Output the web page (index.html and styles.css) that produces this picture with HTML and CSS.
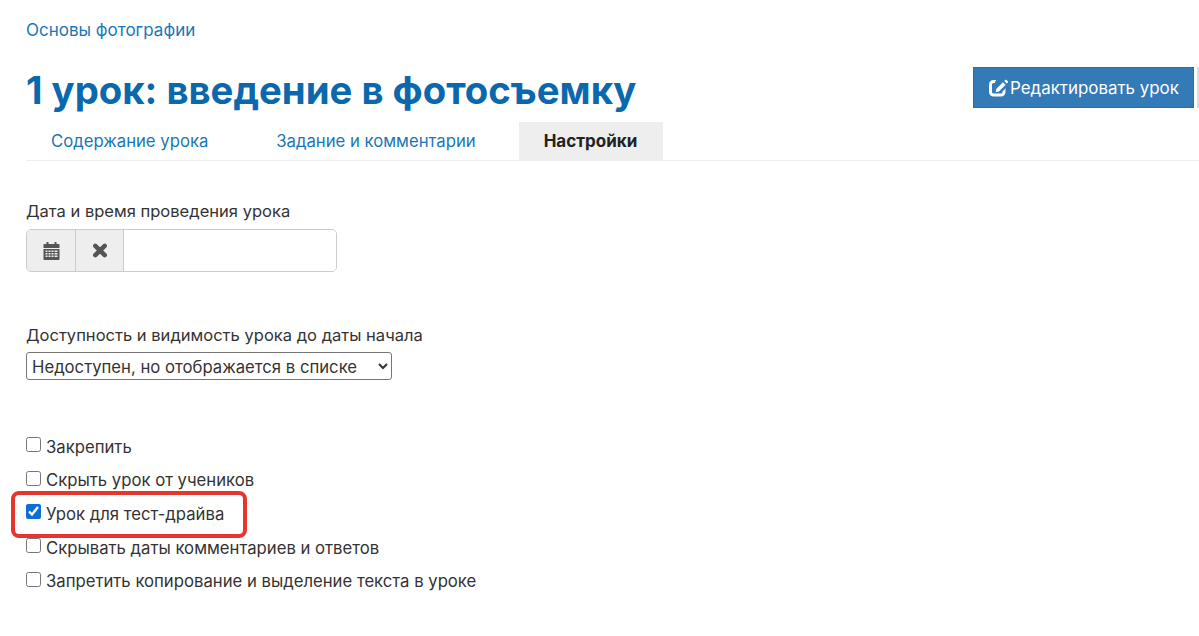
FILE: index.html
```html
<!DOCTYPE html>
<html lang="ru">
<head>
<meta charset="utf-8">
<title>1 урок: введение в фотосъемку</title>
<link rel="stylesheet" href="styles.css">
</head>
<body>
<main class="page">
  <a class="crumb" href="#">Основы фотографии</a>
  <div class="head">
    <h1 class="title">1 урок: введение в фотосъемку</h1>
    <div class="actions">
      <a class="edit-btn" href="#">
        <svg class="edit-icon" viewBox="0 0 19 18" width="19" height="18"><rect x="1.500" y="2.500" width="13.500" height="13.500" rx="3" fill="none" stroke="#fff" stroke-width="3"/><path fill="#337ab7" d="M8 0h11v7l-5 5H6V3z"/><path fill="#fff" d="M14 3.200l2.600 2.600L10 12.400l-3.500.9.900-3.500zM15.200 2l1-1c.4-.4.900-.4 1.300 0l1.300 1.300c.4.400.4.900 0 1.300l-1 1z"/></svg>
        <span>Редактировать урок</span>
      </a>
      <span class="btn-edge"></span>
    </div>
  </div>
  <nav class="tabs">
    <a class="tab" href="#">Содержание урока</a>
    <a class="tab" href="#">Задание и комментарии</a>
    <a class="tab tab-active" href="#">Настройки</a>
  </nav>

  <section class="field field-date">
    <label class="label">Дата и время проведения урока</label>
    <div class="date-group">
      <button class="addon" type="button" aria-label="Календарь">
        <svg viewBox="0 0 16 18" width="17" height="18"><path fill="#555" fill-rule="evenodd" d="M3 0h2v2h6V0h2v2h2c.6 0 1 .4 1 1v3H0V3c0-.6.400-1 1-1h2zM0 7h16v10c0 .6-.4 1-1 1H1c-.6 0-1-.4-1-1zm2 1.500v1.500h2V8.500zm3 0v1.500h2V8.500zm3 0v1.500h2V8.500zm3 0v1.500h3V8.500zM2 11v1.500h2V11zm3 0v1.500h2V11zm3 0v1.500h2V11zm3 0v1.500h3V11zM2 13.500V15h2v-1.500zm3 0V15h2v-1.500zm3 0V15h2v-1.500zm3 0V15h3v-1.500z"/></svg>
      </button>
      <button class="addon addon-narrow" type="button" aria-label="Очистить">
        <svg viewBox="0 0 16 16" width="16" height="15"><path fill="none" stroke="#555" stroke-width="4.800" stroke-linecap="round" d="M3 3l10 10M13 3L3 13"/></svg>
      </button>
      <input class="date-input" type="text">
    </div>
  </section>

  <section class="field field-access">
    <label class="label">Доступность и видимость урока до даты начала</label>
    <select class="access-select">
      <option>Недоступен, но отображается в списке</option>
    </select>
  </section>

  <section class="checks">
    <label class="check"><input type="checkbox"><span>Закрепить</span></label>
    <label class="check"><input type="checkbox"><span>Скрыть урок от учеников</span></label>
    <label class="check check-marked"><input type="checkbox" checked><span>Урок для тест-драйва</span></label>
    <label class="check"><input type="checkbox"><span>Скрывать даты комментариев и ответов</span></label>
    <label class="check"><input type="checkbox"><span>Запретить копирование и выделение текста в уроке</span></label>
  </section>
</main>
</body>
</html>
```
FILE: styles.css
```css
html, body {
  margin: 0;
  padding: 0;
  background: #fff;
}
body {
  font-family: Inter, "Noto Sans", sans-serif;
  font-size: 16px;
  color: #333;
}
.page {
  padding: 20px 0 0 26px;
  height: 616px;
  overflow: hidden;
}
a { text-decoration: none; }
.crumb {
  display: block;
  color: #1a77b5;
  font-size: 17px;
  line-height: 20px;
}
.head {
  display: flex;
  justify-content: space-between;
  align-items: flex-start;
  margin-top: 10px;
  height: 72px;
}
.title {
  margin: 13px 0 0;
  font-size: 38.300px;
  line-height: 54px;
  font-weight: 700;
  color: #0b68ad;
  white-space: nowrap;
}
.actions {
  display: flex;
  margin-top: 17px;
}
.edit-btn {
  display: flex;
  align-items: center;
  gap: 2px;
  box-sizing: border-box;
  width: 221px;
  height: 41px;
  padding-left: 15px;
  background: #337ab7;
  border: 1px solid #2e6da4;
  color: #fff;
  font-size: 16.900px;
}
.btn-edge {
  width: 2px;
  height: 41px;
  margin-left: 3px;
  background: #ddd;
}
.tabs {
  display: flex;
  height: 38px;
  border-bottom: 1px solid #eee;
}
.tab {
  display: flex;
  align-items: center;
  padding: 0 25px;
  margin-right: 18px;
  color: #1a77b5;
  font-size: 16.700px;
}
.tab-active {
  margin-right: 0;
  padding-right: 26px;
  background: #eee;
  color: #222;
  font-size: 17px;
  font-weight: 700;
}
.field { display: block; }
.label {
  display: block;
  font-size: 16.550px;
  line-height: 20px;
  color: #333;
}
.field-date { margin-top: 40px; }
.date-group {
  display: flex;
  width: 311px;
  height: 43px;
  margin-top: 8px;
  box-sizing: border-box;
  border: 1px solid #ccc;
  border-radius: 5px;
  overflow: hidden;
}
.addon {
  display: flex;
  align-items: center;
  justify-content: center;
  width: 49px;
  padding: 0;
  border: 0;
  border-right: 1px solid #ccc;
  background: #eee;
}
.addon-narrow { width: 48px; }
.date-input {
  flex: 1;
  min-width: 0;
  border: 0;
  outline: 0;
  background: #fff;
}
.field-access { margin-top: 53px; }
.access-select {
  display: block;
  width: 366px;
  height: 28px;
  margin-top: 7px;
  padding: 2px 0 0 1px;
  font-family: inherit;
  font-size: 16.700px;
  color: #333;
  background: #fff;
  border: 1px solid #767676;
  border-radius: 3px;
}
.checks { margin-top: 49px; }
.check {
  display: flex;
  align-items: center;
  position: relative;
  height: 33.600px;
  font-size: 16.720px;
  color: #333;
}
.check input {
  width: 15px;
  height: 15px;
  margin: 0 5px 2px 0;
  accent-color: #0b6fd6;
}
.check span { padding-top: 2px; }
.check-marked::after {
  content: "";
  position: absolute;
  left: -15px;
  top: -5px;
  width: 228px;
  height: 39px;
  border: 4px solid #e5352c;
  border-radius: 8px;
  pointer-events: none;
}
```
